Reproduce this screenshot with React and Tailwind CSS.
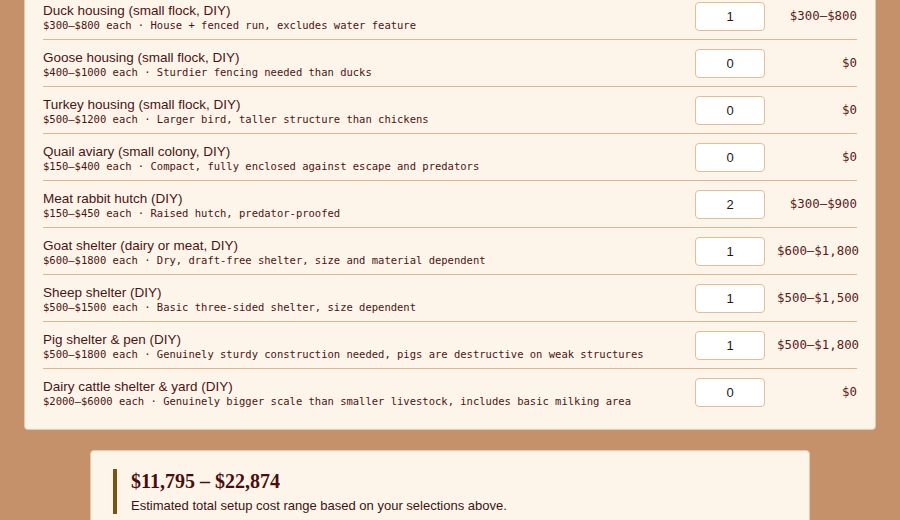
import React from "react";

const items = [
  { name: "Duck housing (small flock, DIY)", lo: 300, hi: 800, note: "House + fenced run, excludes water feature", qty: 1 },
  { name: "Goose housing (small flock, DIY)", lo: 400, hi: 1000, note: "Sturdier fencing needed than ducks", qty: 0 },
  { name: "Turkey housing (small flock, DIY)", lo: 500, hi: 1200, note: "Larger bird, taller structure than chickens", qty: 0 },
  { name: "Quail aviary (small colony, DIY)", lo: 150, hi: 400, note: "Compact, fully enclosed against escape and predators", qty: 0 },
  { name: "Meat rabbit hutch (DIY)", lo: 150, hi: 450, note: "Raised hutch, predator-proofed", qty: 2 },
  { name: "Goat shelter (dairy or meat, DIY)", lo: 600, hi: 1800, note: "Dry, draft-free shelter, size and material dependent", qty: 1 },
  { name: "Sheep shelter (DIY)", lo: 500, hi: 1500, note: "Basic three-sided shelter, size dependent", qty: 1 },
  { name: "Pig shelter & pen (DIY)", lo: 500, hi: 1800, note: "Genuinely sturdy construction needed, pigs are destructive on weak structures", qty: 1 },
  { name: "Dairy cattle shelter & yard (DIY)", lo: 2000, hi: 6000, note: "Genuinely bigger scale than smaller livestock, includes basic milking area", qty: 0 },
];

const fmt = (n) => "$" + n.toLocaleString("en-US");

function Row({ item, last }) {
  const cost = item.qty === 0 ? "$0" : `${fmt(item.lo * item.qty)}–${fmt(item.hi * item.qty)}`;
  return (
    <div className={`flex items-center h-[46px] box-content ${last ? "" : "border-b border-[#dfb78f]"}`}>
      <div className="flex-1 min-w-0 pt-[2px]">
        <div className="text-[13.5px] leading-[17px] text-[#4a1414]" style={{ fontFamily: '"Liberation Sans", Arial, sans-serif' }}>
          {item.name}
        </div>
        <div className="text-[10.5px] leading-[13px] text-[#4a1414] whitespace-nowrap" style={{ fontFamily: '"DejaVu Sans Mono", monospace' }}>
          ${item.lo}–${item.hi} each · {item.note}
        </div>
      </div>
      <input
        type="text"
        readOnly
        value={item.qty}
        className="w-[70px] h-[29px] mt-[1px] shrink-0 rounded-[4px] border border-[#e2bd96] bg-white text-center text-[13px] text-[#1a1a1a] outline-none"
        style={{ fontFamily: '"Liberation Sans", Arial, sans-serif' }}
      />
      <div
        className="w-[80px] shrink-0 ml-3 pt-[1px] text-right text-[12.4px] text-[#5a1a1a] whitespace-nowrap"
        style={{ fontFamily: '"DejaVu Sans Mono", monospace' }}
      >
        {cost}
      </div>
    </div>
  );
}

export default function App() {
  return (
    <div className="w-[900px] h-[520px] overflow-hidden bg-[#c4916a]">
      <div className="mx-[24px] -mt-[8px] rounded-[4px] border border-[#e6c9a8] bg-[#fef5ea] px-[18px] pb-[14px]">
        {items.map((it, i) => (
          <Row key={it.name} item={it} last={i === items.length - 1} />
        ))}
      </div>
      <div className="mx-auto mt-[20px] w-[720px] rounded-[4px] border border-[#e6c9a8] bg-[#fef5ea] px-[22px] pt-[18px] pb-[18px]">
        <div className="border-l-4 border-[#7a5312] pl-[14px]">
          <div className="text-[20px] leading-[24px] font-bold text-[#4a0e0e]" style={{ fontFamily: '"Liberation Serif", "Times New Roman", serif' }}>
            $11,795 – $22,874
          </div>
          <div className="mt-[4px] text-[13px] leading-[17px] text-[#3a1414]" style={{ fontFamily: '"Liberation Sans", Arial, sans-serif' }}>
            Estimated total setup cost range based on your selections above.
          </div>
        </div>
      </div>
    </div>
  );
}
